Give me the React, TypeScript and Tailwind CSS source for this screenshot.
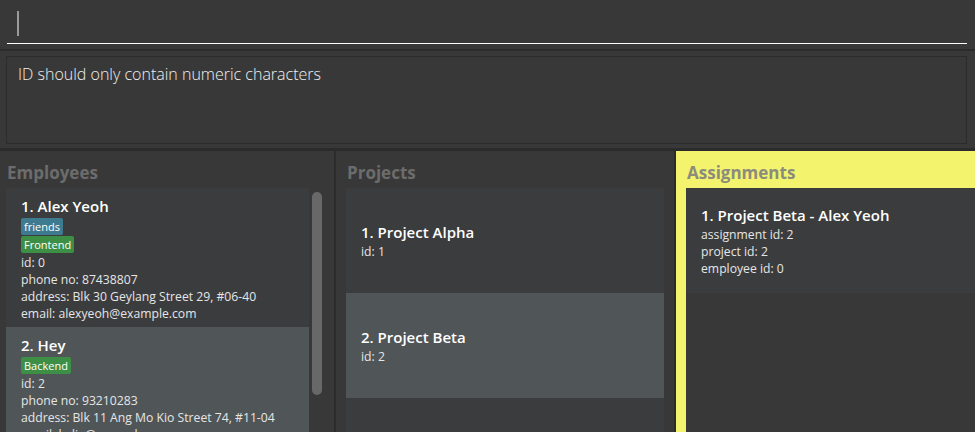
const employees = [
  {
    name: "1. Alex Yeoh",
    tags: [
      { label: "friends", color: "bg-[#3e7b91]" },
      { label: "Frontend", color: "bg-[#3e8f46]" },
    ],
    id: "0",
    phone: "87438807",
    address: "Blk 30 Geylang Street 29, #06-40",
    email: "alexyeoh@example.com",
    selected: false,
  },
  {
    name: "2. Hey",
    tags: [{ label: "Backend", color: "bg-[#3e8f46]" }],
    id: "2",
    phone: "93210283",
    address: "Blk 11 Ang Mo Kio Street 74, #11-04",
    email: "lydia@example.com",
    selected: true,
  },
];

const projects = [
  { name: "1. Project Alpha", id: "1", selected: false },
  { name: "2. Project Beta", id: "2", selected: true },
  { name: "", id: "", selected: false },
];

function Heading({ text, color }: { text: string; color: string }) {
  return (
    <div className={`h-[37px] shrink-0 pt-[11px] pl-[1px] text-[17px] leading-[22px] font-bold ${color}`}>
      {text}
    </div>
  );
}

export default function App() {
  return (
    <div className="w-[975px] h-[432px] overflow-hidden bg-[#2b2b2b] flex flex-col font-['Open_Sans','Noto_Sans',sans-serif] text-[#e6e6e6]">
      {/* command box */}
      <div className="h-[49px] shrink-0 bg-[#383838] pl-[7px] pr-[8px] pt-[11px]">
        <div className="h-[33px] border-b border-white pl-[10px]">
          <div className="w-[2px] h-[25px] bg-[#9a9a9a]" />
        </div>
      </div>

      {/* result display */}
      <div className="h-[97px] mt-[2px] shrink-0 bg-[#383838] pl-[6px] pr-[8px] pt-[5px]">
        <div className="h-[88px] border border-[#2b2b2b] pl-[11px] pt-[7px] text-[16px] leading-[20px] font-light text-[#f0f0f0]">
          ID should only contain numeric characters
        </div>
      </div>

      {/* panels */}
      <div className="flex-1 mt-[3px] flex gap-[2px] min-h-0">
        <div className="w-[334px] shrink-0 bg-[#383838] pl-[6px] flex flex-col">
          <Heading text="Employees" color="text-[#6c6c6c]" />
          <div className="flex flex-1 min-h-0">
            <div className="w-[303px] flex flex-col">
              {employees.map((e) => (
                <div
                  key={e.name}
                  className={`shrink-0 pl-[15px] pt-[7px] pb-[5px] ${e.selected ? "bg-[#505558]" : "bg-[#3b3c3e]"}`}
                >
                  <div className="text-[15px] leading-[22px] font-semibold text-white">{e.name}</div>
                  <div className="flex flex-col items-start gap-[1px] mt-[1px]">
                    {e.tags.map((t) => (
                      <span
                        key={t.label}
                        className={`${t.color} text-white text-[11px] leading-[17px] px-[3px] rounded-[2px]`}
                      >
                        {t.label}
                      </span>
                    ))}
                  </div>
                  <div className="text-[12.2px] leading-[17px] mt-[1px]">
                    <div>id: {e.id}</div>
                    <div>phone no: {e.phone}</div>
                    <div>address: {e.address}</div>
                    <div>email: {e.email}</div>
                  </div>
                </div>
              ))}
            </div>
            <div className="pl-[3px] pt-[4px]">
              <div className="w-[10px] h-[203px] rounded-full bg-[#686868]" />
            </div>
          </div>
        </div>

        <div className="w-[338px] shrink-0 bg-[#383838] px-[10px] flex flex-col">
          <Heading text="Projects" color="text-[#6c6c6c]" />
          <div className="flex flex-col">
            {projects.map((p, i) => (
              <div
                key={i}
                className={`h-[105px] shrink-0 pl-[15px] flex flex-col justify-center ${p.selected ? "bg-[#505558]" : "bg-[#3b3c3e]"}`}
              >
                {p.name && (
                  <>
                    <div className="text-[15px] leading-[22px] font-semibold text-white">{p.name}</div>
                    <div className="text-[12.2px] leading-[17px]">id: {p.id}</div>
                  </>
                )}
              </div>
            ))}
          </div>
        </div>

        <div className="flex-1 bg-[#f3f36e] pl-[10px] flex flex-col">
          <Heading text="Assignments" color="text-[#8c8c7c]" />
          <div className="flex-1 bg-[#383838] flex flex-col">
            <div className="h-[105px] shrink-0 bg-[#3b3c3e] pl-[15px] flex flex-col justify-center">
              <div className="text-[15px] leading-[22px] font-semibold text-white">1. Project Beta - Alex Yeoh</div>
              <div className="text-[12.2px] leading-[17px]">
                <div>assignment id: 2</div>
                <div>project id: 2</div>
                <div>employee id: 0</div>
              </div>
            </div>
          </div>
        </div>
      </div>
    </div>
  );
}
